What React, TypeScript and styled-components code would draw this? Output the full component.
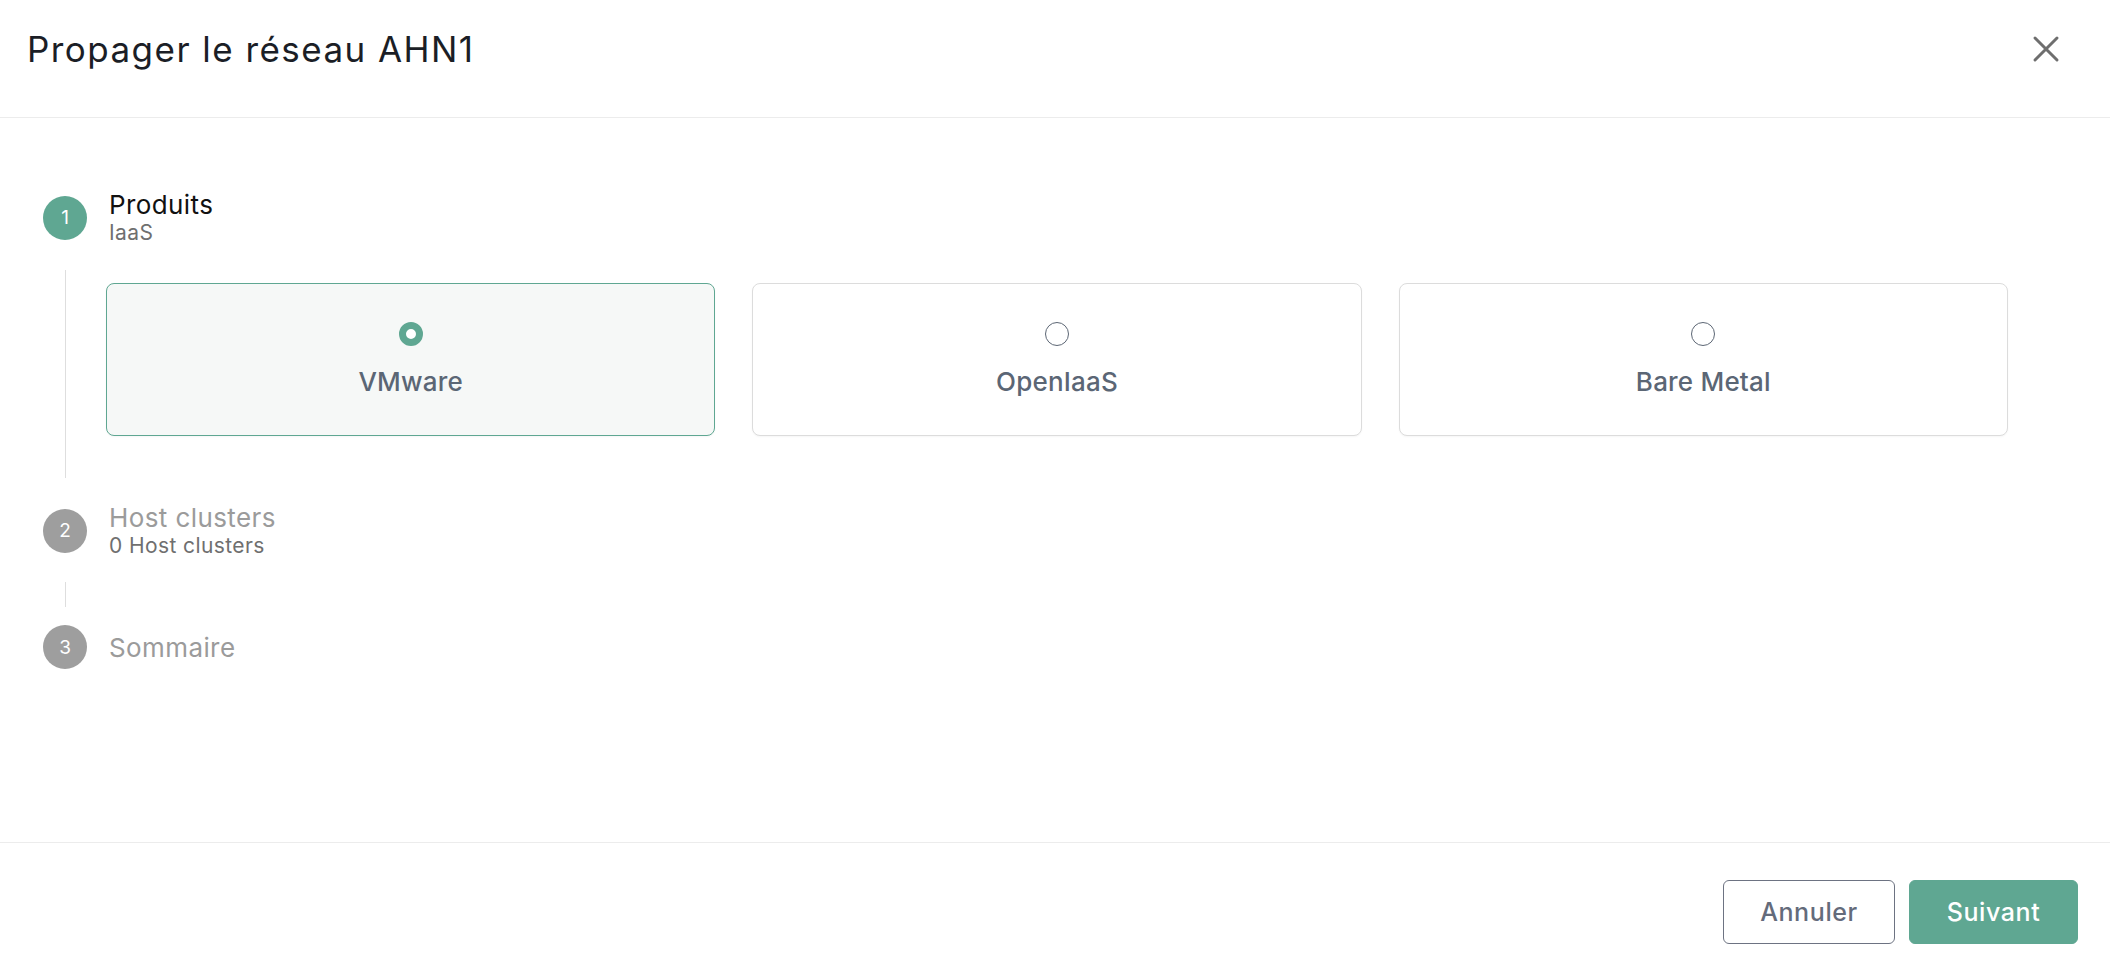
import React from "react";
import styled, { createGlobalStyle } from "styled-components";

const GlobalStyle = createGlobalStyle`
  html, body { margin: 0; padding: 0; background: #ffffff; }
  body { font-family: "Inter", "Noto Sans", sans-serif; }
  * { box-sizing: border-box; }
`;

const GREEN = "#5fa792";

const Page = styled.div`
  height: 966px;
  display: flex;
  flex-direction: column;
  background: #fff;
`;

const Header = styled.header`
  height: 118px;
  flex: none;
  display: flex;
  align-items: center;
  justify-content: space-between;
  padding: 0 46px 19px 27px;
  border-bottom: 1px solid #ececec;
`;

const Title = styled.h1`
  margin: 0;
  font-size: 35px;
  font-weight: 400;
  color: #1b1e26;
  letter-spacing: 1.45px;
`;

const CloseButton = styled.button`
  border: 0;
  background: transparent;
  padding: 0;
  width: 36px;
  height: 36px;
  display: flex;
  align-items: center;
  justify-content: center;
  cursor: pointer;
`;

const Body = styled.main`
  flex: 1;
  padding: 71px 102px 0 43px;
`;

const StepGrid = styled.section`
  display: grid;
  grid-template-columns: 44px 1fr;
  column-gap: 22px;
`;

const Circle = styled.div<{ $active?: boolean }>`
  width: 44px;
  height: 44px;
  border-radius: 50%;
  background: ${(p) => (p.$active ? GREEN : "#9e9e9e")};
  color: #fff;
  display: flex;
  align-items: center;
  justify-content: center;
  font-size: 19px;
  font-weight: 400;
  align-self: center;
`;

const Labels = styled.div`
  display: flex;
  flex-direction: column;
  justify-content: center;
`;

const StepTitle = styled.div<{ $active?: boolean }>`
  font-size: 26px;
  line-height: 31px;
  letter-spacing: 0.4px;
  color: ${(p) => (p.$active ? "#111111" : "#9b9b9b")};
`;

const StepSub = styled.div`
  font-size: 21px;
  line-height: 26px;
  letter-spacing: 0.4px;
  color: #6f6f6f;
`;

const Rail = styled.div<{ $top: number; $bottom: number }>`
  width: 1px;
  background: #dedede;
  justify-self: center;
  margin: ${(p) => p.$top}px 0 ${(p) => p.$bottom}px;
`;

const StepContent = styled.div<{ $pad?: string; $height?: number }>`
  padding: ${(p) => p.$pad ?? "0"};
  ${(p) => (p.$height ? `height: ${p.$height}px;` : "")}
`;

const Cards = styled.div`
  display: grid;
  grid-template-columns: repeat(3, 1fr);
  column-gap: 37px;
  margin-left: -3px;
`;

const Card = styled.label<{ $selected?: boolean }>`
  height: 153px;
  border-radius: 8px;
  border: 1px solid ${(p) => (p.$selected ? GREEN : "#dcdcdc")};
  background: ${(p) => (p.$selected ? "#f6f8f7" : "#ffffff")};
  box-shadow: 0 1px 2px rgba(0, 0, 0, 0.04);
  display: flex;
  flex-direction: column;
  align-items: center;
  justify-content: center;
  gap: 20px;
  cursor: pointer;
`;

const Radio = styled.span<{ $checked?: boolean }>`
  width: 24px;
  height: 24px;
  border-radius: 50%;
  border: ${(p) => (p.$checked ? `7px solid ${GREEN}` : "1px solid #5c6674")};
  background: #fff;
`;

const CardText = styled.span`
  font-size: 26px;
  font-weight: 500;
  letter-spacing: 0.2px;
  color: #5b6675;
`;

const Footer = styled.footer`
  height: 124px;
  flex: none;
  border-top: 1px solid #ececec;
  display: flex;
  align-items: center;
  justify-content: flex-end;
  gap: 14px;
  padding: 14px 32px 0 0;
`;

const Button = styled.button<{ $primary?: boolean }>`
  height: 64px;
  min-width: ${(p) => (p.$primary ? "169px" : "172px")};
  border-radius: 6px;
  font-family: inherit;
  font-size: 25px;
  font-weight: 500;
  letter-spacing: 0.6px;
  cursor: pointer;
  border: 1px solid ${(p) => (p.$primary ? GREEN : "#6d7382")};
  background: ${(p) => (p.$primary ? GREEN : "#ffffff")};
  color: ${(p) => (p.$primary ? "#ffffff" : "#646b7b")};
`;

const products = [
  { name: "VMware", selected: true },
  { name: "OpenIaaS", selected: false },
  { name: "Bare Metal", selected: false },
];

export default function App() {
  return (
    <>
      <GlobalStyle />
      <Page>
        <Header>
          <Title>Propager le réseau AHN1</Title>
          <CloseButton aria-label="Fermer">
            <svg width="28" height="28" viewBox="0 0 28 28">
              <path d="M3 3 L25 25 M25 3 L3 25" stroke="#6e6e6e" strokeWidth="3" strokeLinecap="round" />
            </svg>
          </CloseButton>
        </Header>
        <Body>
          <StepGrid>
            <Circle $active>1</Circle>
            <Labels>
              <StepTitle $active>Produits</StepTitle>
              <StepSub>IaaS</StepSub>
            </Labels>
            <Rail $top={24} $bottom={24} />
            <StepContent $pad="37px 0 66px">
              <Cards>
                {products.map((p) => (
                  <Card key={p.name} $selected={p.selected}>
                    <Radio $checked={p.selected} />
                    <CardText>{p.name}</CardText>
                  </Card>
                ))}
              </Cards>
            </StepContent>

            <Circle>2</Circle>
            <Labels>
              <StepTitle>Host clusters</StepTitle>
              <StepSub>0 Host clusters</StepSub>
            </Labels>
            <Rail $top={23} $bottom={18} />
            <StepContent $height={66} />

            <Circle>3</Circle>
            <Labels>
              <StepTitle>Sommaire</StepTitle>
            </Labels>
          </StepGrid>
        </Body>
        <Footer>
          <Button>Annuler</Button>
          <Button $primary>Suivant</Button>
        </Footer>
      </Page>
    </>
  );
}
